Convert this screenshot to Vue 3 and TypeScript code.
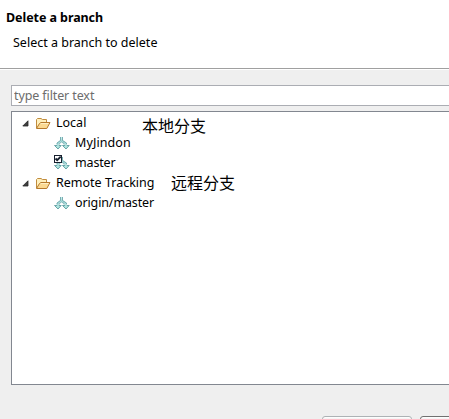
<script setup lang="ts">
interface Row {
  label: string
  kind: 'folder' | 'branch'
  key: string
  checked?: boolean
}

const rows: Row[] = [
  { label: 'Local', kind: 'folder', key: 'local' },
  { label: 'MyJindon', kind: 'branch', key: 'jindon' },
  { label: 'master', kind: 'branch', key: 'master', checked: true },
  { label: 'Remote Tracking', kind: 'folder', key: 'remote' },
  { label: 'origin/master', kind: 'branch', key: 'origin' },
]
</script>

<template>
  <div class="dialog">
    <header class="header">
      <h1 class="title">Delete a branch</h1>
      <p class="subtitle">Select a branch to delete</p>
    </header>
    <main class="body">
      <input class="filter" type="text" placeholder="type filter text" />
      <div class="tree">
        <div v-for="row in rows" :key="row.key" class="row" :class="row.kind">
          <template v-if="row.kind === 'folder'">
            <svg class="arrow" width="7" height="7" viewBox="0 0 7 7">
              <path d="M6 .8V6H.8Z" fill="#404040" stroke="#262626" stroke-width=".8" />
            </svg>
            <svg class="icon" width="16" height="16" viewBox="0 0 16 16">
              <path d="M1.5 13V4.5L2.5 3.5H6L7.5 4.5H11.5V7.5" fill="#fff0bd" stroke="#c08c3e" />
              <path d="M1.5 13.5L4.5 8.5L6 7.5H15L11.8 13.5Z" fill="#fbd992" stroke="#b5792c" stroke-linejoin="round" />
              <path d="M5.6 8.5H13.5" stroke="#fff0c5" />
            </svg>
          </template>
          <svg v-else class="icon" width="16" height="16" viewBox="0 0 16 16">
            <path d="M7.5 2V6" stroke="#c4ebe8" />
            <path d="M4 10V8.5L7.5 5.5L11.5 8.5V10" fill="none" stroke="#a9dcda" stroke-width="2" />
            <path d="M6.5 2V5.5L3 8V9.5M8.5 2V5.5L12.5 8V9.5" fill="none" stroke="#6aa5aa" stroke-width=".9" />
            <path d="M5.5 9.5V8.5L7.5 7L10 8.5V9.5" fill="none" stroke="#6aa5aa" stroke-width=".8" />
            <path d="M.5 10.5H7.2L4 14Z M8.5 10.5H15.2L12 14Z" fill="#aee5df" stroke="#5d9ca0" stroke-width=".9" />
            <path d="M3 10.2H5M11 10.2H13" stroke="#c4eeea" />
            <g v-if="row.checked">
              <rect width="8" height="8" fill="#17202e" />
              <rect x="1" y="1" width="6" height="6" fill="#fff" />
              <path d="M1.5 3.5L3.2 5.2L6.7 1.7" fill="none" stroke="#17202e" stroke-width="1.9" />
            </g>
          </svg>
          <span class="label" :class="row.key">{{ row.label }}</span>
        </div>
      </div>
      <footer class="actions">
        <button class="button" type="button" aria-label="OK"></button>
        <button class="button default" type="button" aria-label="Cancel"></button>
      </footer>
    </main>
    <span class="note local-note">本地分支</span>
    <span class="note remote-note">远程分支</span>
  </div>
</template>

<style>
body {
  overflow: hidden;
}
</style>

<style scoped>
.dialog {
  position: relative;
  width: 449px;
  height: 419px;
  overflow: hidden;
  background: #efefef;
  color: #000;
  font: 13px/20px "Noto Sans", "Noto Sans CJK SC", sans-serif;
}
.header {
  box-sizing: border-box;
  height: 69px;
  padding: 8px 0 0 6px;
  background: #fff;
  border-bottom: 1px solid #a0a0a0;
}
.title {
  margin: 0;
  font-size: 12.5px;
  line-height: 20px;
  font-weight: 700;
  letter-spacing: -0.07px;
  white-space: nowrap;
  width: max-content;
}
.subtitle {
  margin: 5px 0 0 7px;
  line-height: 20px;
  font-size: 12.5px;
  width: max-content;
}
.body {
  border-top: 1px solid #fff;
  padding: 15px 0 0 11px;
}
.filter {
  display: block;
  box-sizing: border-box;
  width: 460px;
  height: 21px;
  padding: 0 2px;
  border: 1px solid #abadb3;
  border-radius: 0;
  outline: none;
  background: #fff;
  font: inherit;
  font-size: 12.5px;
  letter-spacing: -0.11px;
}
.filter::placeholder {
  color: #6d6d6d;
  opacity: 1;
}
.tree {
  box-sizing: border-box;
  width: 460px;
  height: 274px;
  margin-top: 5px;
  padding: 1px 0 0 10px;
  border: 1px solid #828790;
  background: #fff;
}
.row {
  display: flex;
  align-items: center;
  height: 20px;
}
.branch {
  padding-left: 32px;
}
.arrow {
  margin-right: 6px;
}
.icon {
  margin-right: 5px;
  flex: none;
}
.label {
  font-size: 12.5px;
  white-space: nowrap;
}
.jindon {
  letter-spacing: 0.1px;
}
.master {
  letter-spacing: -0.15px;
}
.origin {
  letter-spacing: -0.12px;
}
.note {
  position: absolute;
  font: 16px/20px "Noto Sans CJK SC", sans-serif;
  white-space: nowrap;
}
.local-note {
  left: 142px;
  top: 115px;
}
.remote-note {
  left: 171px;
  top: 172px;
}
.actions {
  display: flex;
  gap: 8px;
  width: 200px;
  margin: 31px 0 0 311px;
}
.button {
  box-sizing: border-box;
  flex: none;
  width: 90px;
  height: 23px;
  border: 1px solid #adb2b5;
  border-radius: 3px;
  background: #f5f5f5;
  box-shadow: inset 0 0 0 1px #fcfcfc;
}
.button.default {
  border-color: #707070;
}
</style>
